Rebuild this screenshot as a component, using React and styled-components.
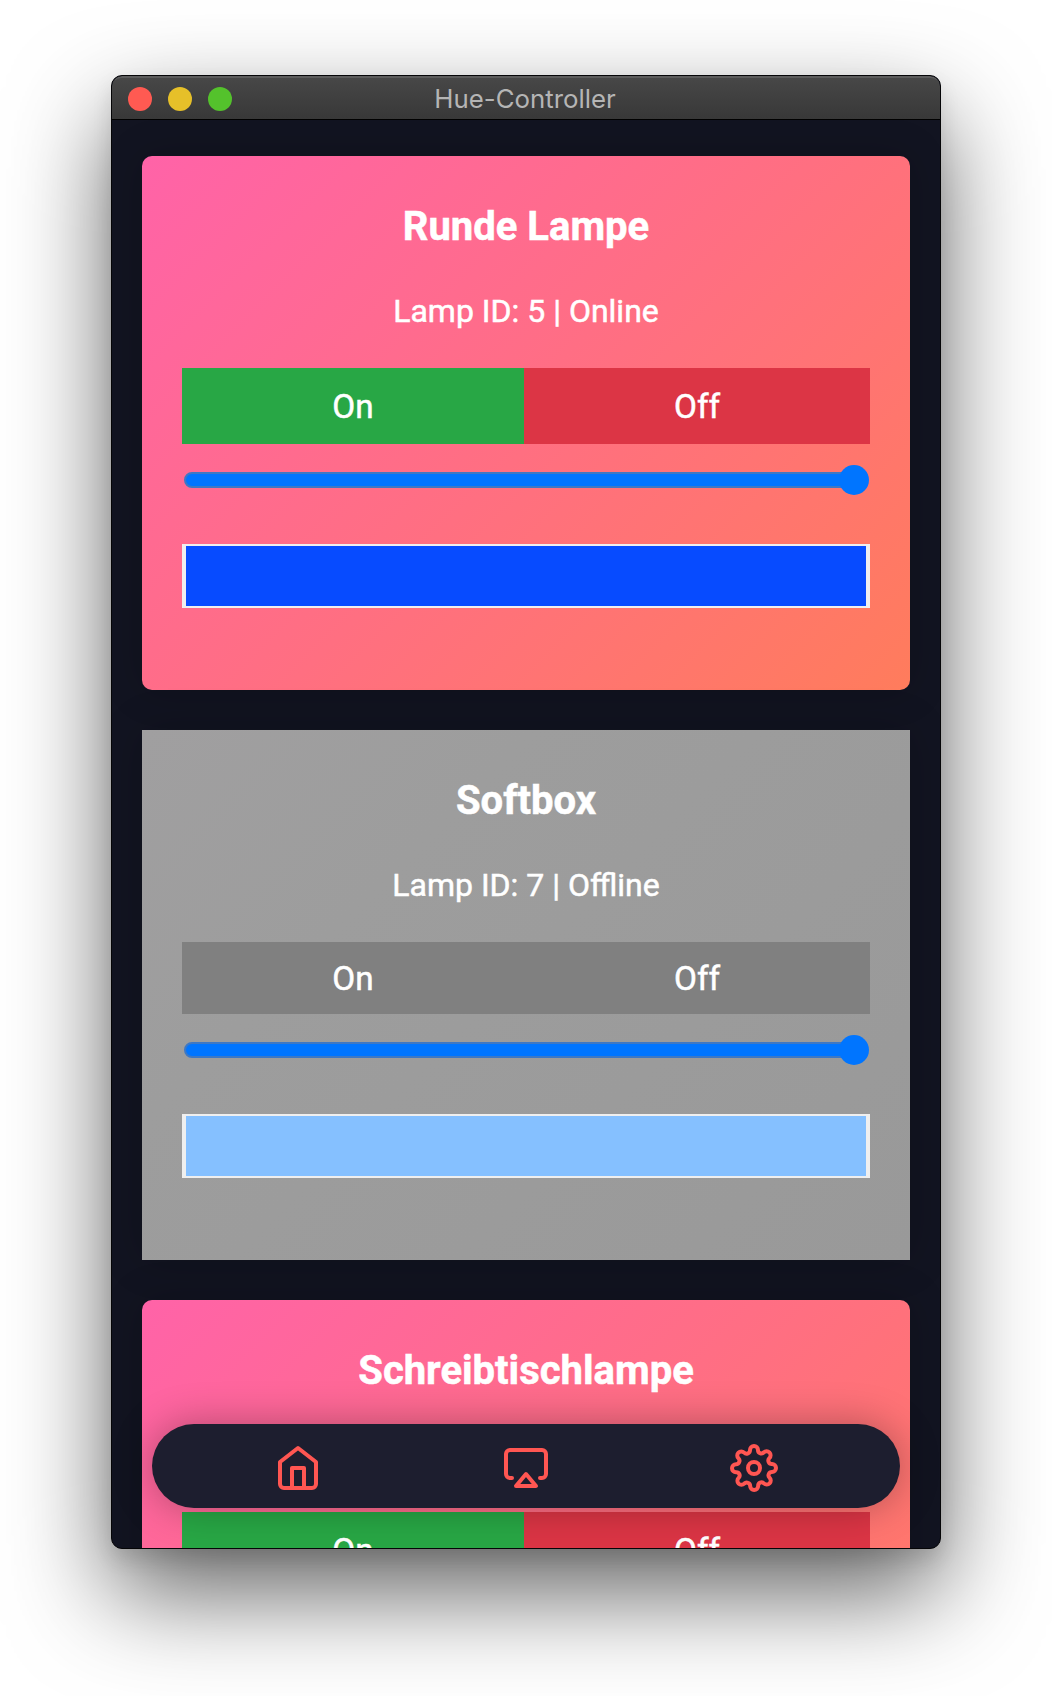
import React from "react";
import styled, { createGlobalStyle } from "styled-components";

const GlobalStyle = createGlobalStyle`
  *, *::before, *::after { box-sizing: border-box; }
  body { margin: 0; background: #fff; }
`;

const Desktop = styled.div`
  height: 1696px;
  padding: 75px 111px 147px;
  overflow: hidden;
  background: #fff;
  font-family: Roboto, "Liberation Sans", sans-serif;
`;

const Window = styled.main`
  position: relative;
  display: flex;
  flex-direction: column;
  height: 1474px;
  border: 1px solid #050507;
  border-radius: 11px;
  overflow: hidden;
  background: #121421;
  box-shadow: 0 44px 100px rgba(0, 0, 0, 0.61), 0 10px 20px rgba(0, 0, 0, 0.1);
`;

const TitleBar = styled.header`
  display: grid;
  grid-template-columns: 1fr auto 1fr;
  align-items: center;
  flex: none;
  height: 44px;
  padding: 0 18px 0 16px;
  border-top: 2px solid #5c5c5c;
  border-bottom: 1px solid #000;
  border-radius: 10px 10px 0 0;
  background: linear-gradient(#474747, #383838);
`;

const Lights = styled.div`
  display: flex;
  gap: 16px;
`;

const Light = styled.span`
  width: 24px;
  height: 24px;
  border-radius: 50%;
  background: ${(p) => p.$color};
`;

const AppTitle = styled.span`
  font: 400 25.8px/30px Inter, sans-serif;
  color: #b5b5b5;
`;

const LampList = styled.section`
  display: flex;
  flex-direction: column;
  gap: 40px;
  flex: 1;
  min-height: 0;
  padding: 36px 30px 0;
  overflow: hidden;
`;

const Card = styled.article`
  flex: none;
  padding: 47px 40px 82px;
  border-radius: ${(p) => (p.$offline ? 0 : 10)}px;
  color: #fff;
  text-align: center;
  background: ${(p) =>
    p.$offline
      ? "linear-gradient(135deg, #a09fa0, #9d9d9d 30%, #999999)"
      : "linear-gradient(135deg, #ff63a8, #ff6f81 52%, #ff7c5c)"};
  box-shadow: 0 0 40px rgba(0, 0, 0, 0.2);
`;

const LampName = styled.h2`
  margin: 0;
  font-size: 40px;
  line-height: 48px;
  font-weight: 700;
  -webkit-text-stroke: 0.5px #fff;
`;

const LampStatus = styled.p`
  margin: 41px 0 38px;
  font-size: 32px;
  line-height: 38px;
  -webkit-text-stroke: 0.5px #fff;
`;

const Switch = styled.div`
  display: flex;
  height: ${(p) => (p.$offline ? 72 : 76)}px;
`;

const SwitchButton = styled.button`
  flex: none;
  width: ${(p) => p.$width}px;
  padding: 2px 0 0;
  border: 0;
  font: 400 33.3px/40px Roboto, sans-serif;
  -webkit-text-stroke: 0.5px #fff;
  color: #fff;
  background: ${(p) => p.$color};
`;

const Slider = styled.div`
  display: flex;
  align-items: center;
  justify-content: flex-end;
  height: 16px;
  margin: 28px 2px 0;
  border: 2px solid #3e78c4;
  border-radius: 8px;
  background: #0075ff;
`;

const Thumb = styled.span`
  flex: none;
  width: 30px;
  height: 30px;
  margin-right: -3px;
  border-radius: 50%;
  background: #0075ff;
`;

const Swatch = styled.div`
  height: 64px;
  margin-top: 56px;
  border: solid #efefef;
  border-width: 2px 4px;
  background: ${(p) => p.$color};
`;

const NavBar = styled.nav`
  position: absolute;
  left: 40px;
  right: 40px;
  bottom: 40px;
  display: grid;
  grid-template-columns: repeat(3, 1fr);
  place-items: center;
  height: 84px;
  padding: 4px 32px 0;
  border-radius: 42px;
  background: #1d1e2f;
  box-shadow: 0 0 40px rgba(0, 0, 0, 0.3);
`;

const NavIcon = styled.svg.attrs({ viewBox: "0 0 24 24" })`
  width: 48px;
  height: 48px;
  fill: none;
  stroke: #ff5652;
  stroke-width: 2;
  stroke-linecap: round;
  stroke-linejoin: round;
`;

const lamps = [
  { id: 5, name: "Runde Lampe", online: true, color: "#074bff" },
  { id: 7, name: "Softbox", online: false, color: "#85c0ff" },
  { id: 8, name: "Schreibtischlampe", online: true, color: "#074bff" },
];

function Lamp({ lamp }) {
  const offline = !lamp.online;
  return (
    <Card $offline={offline}>
      <LampName>{lamp.name}</LampName>
      <LampStatus>
        Lamp ID: {lamp.id} | {offline ? "Offline" : "Online"}
      </LampStatus>
      <Switch $offline={offline}>
        <SwitchButton $width={342} $color={offline ? "#808080" : "#28a745"}>On</SwitchButton>
        <SwitchButton $width={346} $color={offline ? "#808080" : "#dc3545"}>Off</SwitchButton>
      </Switch>
      <Slider>
        <Thumb />
      </Slider>
      <Swatch $color={lamp.color} />
    </Card>
  );
}

export default function App() {
  return (
    <Desktop>
      <GlobalStyle />
      <Window>
        <TitleBar>
          <Lights>
            <Light $color="#ff5a52" />
            <Light $color="#e6c029" />
            <Light $color="#54c22c" />
          </Lights>
          <AppTitle>Hue-Controller</AppTitle>
        </TitleBar>
        <LampList>
          {lamps.map((lamp) => (
            <Lamp key={lamp.id} lamp={lamp} />
          ))}
        </LampList>
        <NavBar>
          <NavIcon>
            <path d="M3 9l9-7 9 7v11a2 2 0 0 1-2 2H5a2 2 0 0 1-2-2z" />
            <polyline points="9 22 9 12 15 12 15 22" />
          </NavIcon>
          <NavIcon>
            <path d="M5 17H4a2 2 0 0 1-2-2V5a2 2 0 0 1 2-2h16a2 2 0 0 1 2 2v10a2 2 0 0 1-2 2h-1" />
            <polygon points="12 15 17 21 7 21 12 15" />
          </NavIcon>
          <NavIcon>
            <circle cx="12" cy="12" r="3" />
            <path d="M19.4 15a1.65 1.65 0 0 0 .33 1.82l.06.06a2 2 0 0 1 0 2.83 2 2 0 0 1-2.83 0l-.06-.06a1.65 1.65 0 0 0-1.82-.33 1.65 1.65 0 0 0-1 1.51V21a2 2 0 0 1-2 2 2 2 0 0 1-2-2v-.09A1.65 1.65 0 0 0 9 19.4a1.65 1.65 0 0 0-1.82.33l-.06.06a2 2 0 0 1-2.83 0 2 2 0 0 1 0-2.83l.06-.06a1.65 1.65 0 0 0 .33-1.82 1.65 1.65 0 0 0-1.51-1H3a2 2 0 0 1-2-2 2 2 0 0 1 2-2h.09A1.65 1.65 0 0 0 4.6 9a1.65 1.65 0 0 0-.33-1.82l-.06-.06a2 2 0 0 1 0-2.83 2 2 0 0 1 2.83 0l.06.06a1.65 1.65 0 0 0 1.82.33H9a1.65 1.65 0 0 0 1-1.51V3a2 2 0 0 1 2-2 2 2 0 0 1 2 2v.09a1.65 1.65 0 0 0 1 1.51 1.65 1.65 0 0 0 1.82-.33l.06-.06a2 2 0 0 1 2.83 0 2 2 0 0 1 0 2.83l-.06.06a1.65 1.65 0 0 0-.33 1.82V9a1.65 1.65 0 0 0 1.51 1H21a2 2 0 0 1 2 2 2 2 0 0 1-2 2h-.09a1.65 1.65 0 0 0-1.51 1z" />
          </NavIcon>
        </NavBar>
      </Window>
    </Desktop>
  );
}
